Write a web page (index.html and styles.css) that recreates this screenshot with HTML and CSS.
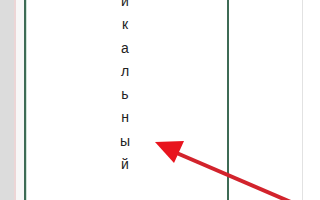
FILE: index.html
```html
<!doctype html>
<html lang="ru">
<head>
	<meta charset="UTF-8">
	<title>Лист</title>
	<link rel="stylesheet" href="styles.css">
</head>
<body>
	<div class="sheet">
		<div class="sheet-head"></div>
		<div class="sheet-gap"></div>
		<div class="sheet-sel">
			<ul class="sheet-text">
				<li>и</li>
				<li>к</li>
				<li>а</li>
				<li>л</li>
				<li>ь</li>
				<li>н</li>
				<li>ы</li>
				<li>й</li>
			</ul>
		</div>
		<div class="sheet-col"></div>
		<div class="sheet-rest"></div>
		<svg class="arrow" width="320" height="200" viewBox="0 0 320 200">
			<line x1="172" y1="151" x2="300" y2="206" stroke="#d2232c" stroke-width="4"/>
			<polygon points="155,142 184,141 174,163" fill="#e8141e"/>
		</svg>
	</div>
</body>
</html>
```
FILE: styles.css
```css
*{margin: 0;padding: 0;}
body{background: #fff;font-family: "Liberation Sans", Arial, sans-serif;}
.sheet{position: relative;display: flex;height: 200px;width: 320px;overflow: hidden;}
.sheet-head{width: 14px;background: #dcdcdc;border-right: 2px solid #ecd6d6;}
.sheet-gap{width: 8px;background: #f7f7f7;}
.sheet-sel{width: 201px;border-left: 2px solid #3d6b55;border-right: 2px solid #3d6b55;
	box-shadow: inset 1px 0 0 #cfe3d8;}
.sheet-text{list-style: none;margin: -10px 0 0 94px;width: 10px;text-align: center;
	font-size: 14px;line-height: 23.3px;color: #222;}
.sheet-col{width: 73px;border-right: 1px solid #e2e2e2;}
.sheet-rest{flex: 1;}
.arrow{position: absolute;left: 0;top: 0;}
```
